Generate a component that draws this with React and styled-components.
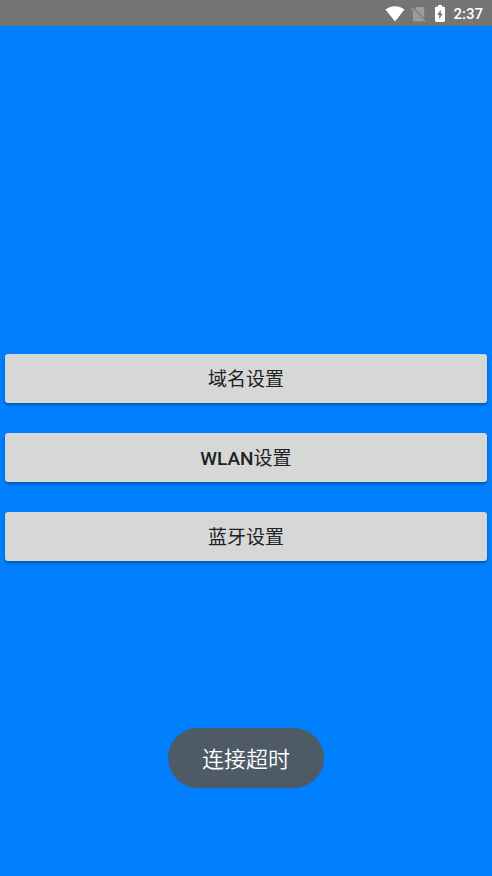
import React from "react";
import styled, { createGlobalStyle } from "styled-components";

const GlobalStyle = createGlobalStyle`
  * { box-sizing: border-box; }
  body { margin: 0; background: #007fff; font-family: Roboto, "Noto Sans CJK SC", sans-serif; }
`;

const Screen = styled.div`
  min-height: 100vh;
  display: flex;
  flex-direction: column;
  background: #007fff;
`;

const StatusBar = styled.header`
  display: flex;
  align-items: center;
  justify-content: flex-end;
  height: 26px;
  padding: 1px 9px 0;
  background: #757575;
  color: #fff;
`;

const StatusIcon = styled.svg`
  display: block;
  flex: none;
  margin-right: ${(p) => p.$gap}px;
`;

const Clock = styled.time`
  font-size: 15px;
  line-height: 24px;
  font-weight: 500;
`;

const Menu = styled.main`
  flex: 1;
  display: flex;
  flex-direction: column;
  justify-content: center;
  gap: 30px;
  padding: 12px 5px 0;
`;

const MenuButton = styled.button`
  height: 49px;
  padding: 3px 8px 0;
  border: 0;
  border-radius: 3px;
  background: #d6d7d7;
  box-shadow: 0 2px 3px rgba(0, 0, 0, 0.3);
  color: #212121;
  font-family: inherit;
  font-size: 19px;
  font-weight: 400;
  line-height: 28px;
  cursor: pointer;
`;

const Latin = styled.span`
  font-weight: 500;
`;

const ToastLayer = styled.div`
  position: fixed;
  left: 0;
  right: 0;
  bottom: 88px;
  display: flex;
  justify-content: center;
  pointer-events: none;
`;

const Toast = styled.div`
  padding: 16px 34px 12px;
  border-radius: 30px;
  background: #4e5a66;
  color: #fff;
  font-size: 22px;
  line-height: 32px;
  font-weight: 350;
`;

const items = [
  { label: "域名设置" },
  { latin: "WLAN", label: "设置" },
  { label: "蓝牙设置" },
];

export default function App() {
  return (
    <Screen>
      <GlobalStyle />
      <StatusBar>
        <StatusIcon $gap={6} width="20" height="16" viewBox="0 0 20 16" role="img" aria-label="Wi-Fi">
          <path d="M0.5 3.6C6-1 14-1 19.5 3.6L10 15.6Z" fill="#fff" />
        </StatusIcon>
        <StatusIcon $gap={9} width="15" height="16" viewBox="0 0 15 16" role="img" aria-label="No SIM">
          <path d="M6 1H13.2V12.2L4.2 3Z M2 4.6L12.6 15.2H2Z" fill="#9c9c9c" />
          <path d="M0.6 1.8L14 15.4" stroke="#a6a6a6" strokeWidth="1.1" />
        </StatusIcon>
        <StatusIcon $gap={8} width="10" height="17" viewBox="7 2 10 20" preserveAspectRatio="none" role="img" aria-label="Charging">
          <path
            d="M15.67 4H14V2h-4v2H8.33C7.6 4 7 4.6 7 5.33v15.33C7 21.4 7.6 22 8.33 22h7.33c.74 0 1.34-.6 1.34-1.33V5.33C17 4.6 16.4 4 15.67 4zM11.2 18.5v-4.7H9.2L12.8 7.5v4.8h2L11.2 18.5z"
            fill="#fff"
          />
        </StatusIcon>
        <Clock>2:37</Clock>
      </StatusBar>
      <Menu>
        {items.map((item) => (
          <MenuButton key={item.label + (item.latin || "")} type="button">
            {item.latin && <Latin>{item.latin}</Latin>}
            {item.label}
          </MenuButton>
        ))}
      </Menu>
      <ToastLayer>
        <Toast role="status">连接超时</Toast>
      </ToastLayer>
    </Screen>
  );
}
